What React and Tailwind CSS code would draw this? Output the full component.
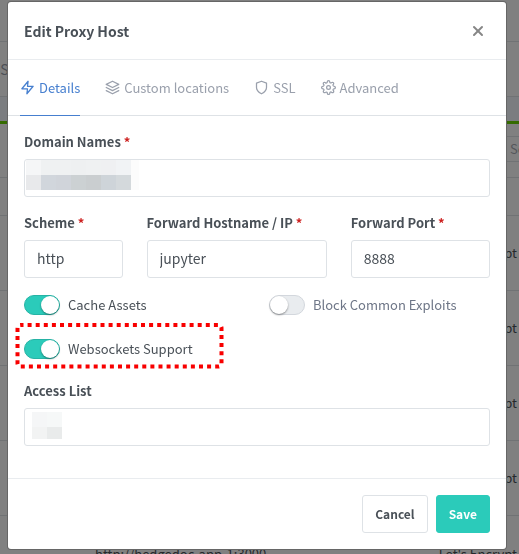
import { FiZap, FiLayers, FiShield, FiSettings, FiX } from 'react-icons/fi'

const tabs = [
  { name: 'Details', icon: FiZap, active: true },
  { name: 'Custom locations', icon: FiLayers },
  { name: 'SSL', icon: FiShield },
  { name: 'Advanced', icon: FiSettings },
]

const rows = [1, 2, 3, 4]

const inputClass = 'block h-[38px] w-full rounded-[3px] border border-[#dee2e6] bg-white px-3 pb-[2px] text-sm text-[#495057] outline-none'

function Field({ id, label, required, className = '', children }) {
  return (
    <div className={className}>
      <label htmlFor={id} className="mb-[7px] block text-[13px] leading-5 font-bold whitespace-nowrap">
        {label}
        {required && <span className="text-[#cd201f]"> *</span>}
      </label>
      {children}
    </div>
  )
}

function Toggle({ label, on }) {
  return (
    <label className="flex h-5 items-center gap-2">
      <input type="checkbox" defaultChecked={on} className="peer sr-only" />
      <span className="flex h-5 w-9 items-center rounded-full border border-[#d3d7dd] bg-[#e9ecef] peer-checked:justify-end peer-checked:border-[#26b3a5] peer-checked:bg-[#2bcbba]">
        <span className="size-[18px] rounded-full bg-white shadow-[0_1px_2px_rgba(0,0,0,0.4)]" />
      </span>
      <span className="text-[13px] leading-5 whitespace-nowrap text-[#6e7687] peer-checked:text-[#495057]">{label}</span>
    </label>
  )
}

// Proxy host list, dimmed behind the dialog
function HostList() {
  return (
    <div className="h-screen overflow-hidden bg-[#7b7d80] text-[13px] text-[#25292c]">
      <div className="h-[42px] border-b border-[#707274] bg-[#808080]" />
      <div className="flex h-[55px] items-center border-b border-[#707274] bg-[#808080]">
        <span className="-ml-2 text-sm text-[#4d5056]">SSL</span>
      </div>
      <div className="h-6" />
      <div className="h-[3px] bg-[#356b00]" />
      <div className="bg-[#808080]">
        <div className="flex h-[54px] items-start justify-end border-b border-[#707274] pt-3">
          <div className="h-[26px] w-3 border-y border-[#707274] pl-[3px] leading-6 text-[#54575b]">Se</div>
        </div>
        <div className="h-[38px] border-b border-[#707274]" />
        {rows.map(n => (
          <div key={n} className="flex h-[75px] items-center justify-end border-b border-[#707274] pr-[2px]">
            <span>pt</span>
          </div>
        ))}
        <div className="flex h-[75px] items-center justify-between pr-[2px] pl-[95px]">
          <span>http://hedgedoc-app-1:3000</span>
          <span>Let's Encrypt</span>
        </div>
      </div>
    </div>
  )
}

export default function App() {
  return (
    <div className="font-['Source_Sans_Pro','Noto_Sans_CJK_SC',sans-serif]">
      <HostList />

      <div className="fixed inset-0 overflow-hidden pt-[2px] pr-[13px] pl-2">
        <div role="dialog" aria-label="Edit Proxy Host" className="rounded-[3px] bg-white text-[#495057] shadow-[0_0_0_1px_#666]">
          <div className="flex h-[58px] items-center justify-between border-b border-[#e9ecef] pr-5 pl-4">
            <h5 className="text-sm leading-6 font-bold">Edit Proxy Host</h5>
            <button type="button" aria-label="Close" className="text-[#868686]">
              <FiX className="size-4" strokeWidth={3} />
            </button>
          </div>

          <nav className="flex h-14 gap-[25px] border-b border-[#dee2e6] px-3">
            {tabs.map(({ name, icon: Icon, active }) => (
              <a key={name} href="#"
                className={active
                  ? '-mb-px flex items-center gap-1 border-b border-[#467fcf] text-[13px] whitespace-nowrap text-[#467fcf]'
                  : 'flex items-center gap-1 text-[13px] whitespace-nowrap text-[#9aa0ac]'}>
                <Icon className="size-[15px] shrink-0" />
                {name}
              </a>
            ))}
          </nav>

          <form className="px-4 pt-4 pb-8">
            <Field id="domains" label="Domain Names" required>
              <button id="domains" type="button" role="combobox" aria-expanded="false" className="flex h-[38px] w-full items-start rounded-[3px] border border-[#dee2e6] px-px">
                <span className="grid grid-cols-[15px_15px_15px_15px_15px_15px_15px_8px]">
                  <span className="h-[15px] bg-[#f5f6f7]" />
                  <span className="h-[15px] bg-[#eff1f2]" />
                  <span className="h-[15px] bg-[#eff1f2]" />
                  <span className="h-[15px] bg-[#eef0f1]" />
                  <span className="h-[15px] bg-[#eff1f2]" />
                  <span className="h-[15px] bg-[#eff0f2]" />
                  <span className="h-[15px] bg-[#f1f3f5]" />
                  <span className="h-[15px] bg-[#fcfcfc]" />
                  <span className="h-[15px] bg-[#e8e9eb]" />
                  <span className="h-[15px] bg-[#d1d6dc]" />
                  <span className="h-[15px] bg-[#d0d4da]" />
                  <span className="h-[15px] bg-[#ccd1d3]" />
                  <span className="h-[15px] bg-[#caced0]" />
                  <span className="h-[15px] bg-[#ced4d9]" />
                  <span className="h-[15px] bg-[#d4d9dc]" />
                  <span className="h-[15px] bg-[#fcfcfc]" />
                </span>
              </button>
            </Field>

            <div className="mt-4 grid grid-cols-12 gap-x-6">
              <Field id="scheme" label="Scheme" required className="col-span-3">
                <select id="scheme" defaultValue="http" className={`${inputClass} appearance-none`}>
                  <option>http</option>
                  <option>https</option>
                </select>
              </Field>
              <Field id="host" label="Forward Hostname / IP" required className="col-span-5">
                <input id="host" type="text" defaultValue="jupyter" className={inputClass} />
              </Field>
              <Field id="port" label="Forward Port" required className="col-span-4">
                <input id="port" type="text" defaultValue="8888" className={inputClass} />
              </Field>
            </div>

            <div className="mt-[17px] grid grid-cols-2 gap-x-6 gap-y-6">
              <Toggle label="Cache Assets" on />
              <Toggle label="Block Common Exploits" />
              <div className="relative">
                <Toggle label="Websockets Support" on />
                {/* dotted marker */}
                <svg className="pointer-events-none absolute -top-4 -left-[9px]" width="209" height="47" viewBox="0 0 209 47" fill="none">
                  <rect x="2.5" y="2" width="204" height="41.5" rx="3" stroke="#f80000" strokeWidth="4" strokeDasharray="4 4.1" strokeDashoffset="1" />
                </svg>
              </div>
            </div>

            <Field id="access" label="Access List" className="mt-[22px]">
              <button id="access" type="button" role="combobox" aria-expanded="false" className="flex h-[38px] w-full items-start rounded-[3px] border border-[#dee2e6] px-[7px] pt-[3px]">
                <span className="grid grid-cols-[15px_15px]">
                  <span className="h-[15px] bg-[#f5f6f7]" />
                  <span className="h-[15px] bg-[#f6f8f8]" />
                  <span className="h-3 bg-[#f2f3f3]" />
                  <span className="h-3 bg-[#e9ebeb]" />
                </span>
              </button>
            </Field>
          </form>

          <div className="flex justify-end gap-2 border-t border-[#e9ecef] p-4">
            <button type="button" className="h-[38px] rounded-[3px] border border-[#dee2e6] bg-white px-3 text-xs font-bold">
              Cancel
            </button>
            <button type="button" className="h-[38px] rounded-[3px] border border-[#2bcbba] bg-[#2bcbba] px-3 text-xs font-bold text-white">
              Save
            </button>
          </div>
        </div>
      </div>
    </div>
  )
}
